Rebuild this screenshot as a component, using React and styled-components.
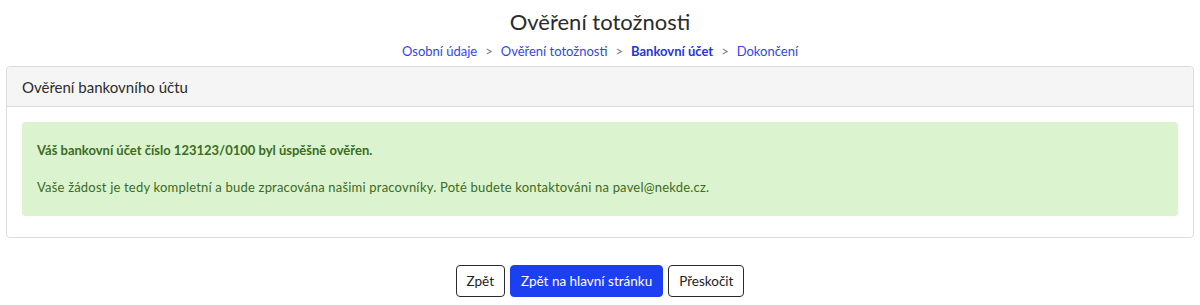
import React from "react";
import styled, { createGlobalStyle } from "styled-components";

const GlobalStyle = createGlobalStyle`
  body {
    margin: 0;
    background: #fff;
    font-family: Lato, "Noto Sans", sans-serif;
    color: #333;
  }
`;

const Page = styled.div`
  padding: 0 6px 8px 6px;
`;

const Title = styled.h1`
  margin: 0;
  padding-top: 8px;
  text-align: center;
  font-size: 22px;
  font-weight: 400;
  line-height: 28px;
  color: #2b2b2b;
`;

const Crumbs = styled.nav`
  display: flex;
  justify-content: center;
  gap: 8px;
  margin-top: 7px;
  font-size: 13px;
  line-height: 16px;
`;

const Crumb = styled.span`
  color: ${(p) => (p.active ? "#1f35d8" : "#3247e6")};
  font-weight: ${(p) => (p.active ? 700 : 400)};
`;

const Sep = styled.span`
  color: #777;
`;

const Panel = styled.section`
  margin-top: 7px;
  border: 1px solid #dcdcdc;
  border-radius: 4px;
  background: #fff;
`;

const PanelHeader = styled.div`
  background: #f5f5f5;
  border-bottom: 1px solid #dcdcdc;
  border-radius: 4px 4px 0 0;
  padding: 11px 15px 10px;
  font-size: 15px;
  line-height: 18px;
  color: #2b2b2b;
`;

const PanelBody = styled.div`
  padding: 15px 15px 21px;
`;

const Alert = styled.div`
  background: #dbf4cf;
  border-radius: 4px;
  padding: 20px 15px 21px;
  color: #3c6b22;
  font-size: 13px;
  line-height: 16px;
`;

const Line = styled.p`
  margin: 0;
  font-weight: ${(p) => (p.bold ? 700 : 400)};
  letter-spacing: ${(p) => (p.bold ? "0" : "0.2px")};
  & + & {
    margin-top: 21px;
  }
`;

const Actions = styled.div`
  display: flex;
  justify-content: center;
  gap: 5px;
  margin-top: 27px;
`;

const Button = styled.button`
  height: 32px;
  padding: 0 10px;
  border-radius: 4px;
  font-family: inherit;
  font-size: 13.5px;
  cursor: pointer;
  border: 1px solid ${(p) => (p.primary ? "#1c3ff2" : "#2b2b2b")};
  background: ${(p) => (p.primary ? "#1c3ff2" : "#fff")};
  color: ${(p) => (p.primary ? "#fff" : "#222")};
`;

export default function App() {
  return (
    <Page>
      <GlobalStyle />
      <Title>Ověření totožnosti</Title>
      <Crumbs>
        <Crumb>Osobní údaje</Crumb>
        <Sep>&gt;</Sep>
        <Crumb>Ověření totožnosti</Crumb>
        <Sep>&gt;</Sep>
        <Crumb active>Bankovní účet</Crumb>
        <Sep>&gt;</Sep>
        <Crumb>Dokončení</Crumb>
      </Crumbs>
      <Panel>
        <PanelHeader>Ověření bankovního účtu</PanelHeader>
        <PanelBody>
          <Alert>
            <Line bold>Váš bankovní účet číslo 123123/0100 byl úspěšně ověřen.</Line>
            <Line>
              Vaše žádost je tedy kompletní a bude zpracována našimi pracovníky.
              Poté budete kontaktováni na pavel@nekde.cz.
            </Line>
          </Alert>
        </PanelBody>
      </Panel>
      <Actions>
        <Button>Zpět</Button>
        <Button primary>Zpět na hlavní stránku</Button>
        <Button>Přeskočit</Button>
      </Actions>
    </Page>
  );
}
